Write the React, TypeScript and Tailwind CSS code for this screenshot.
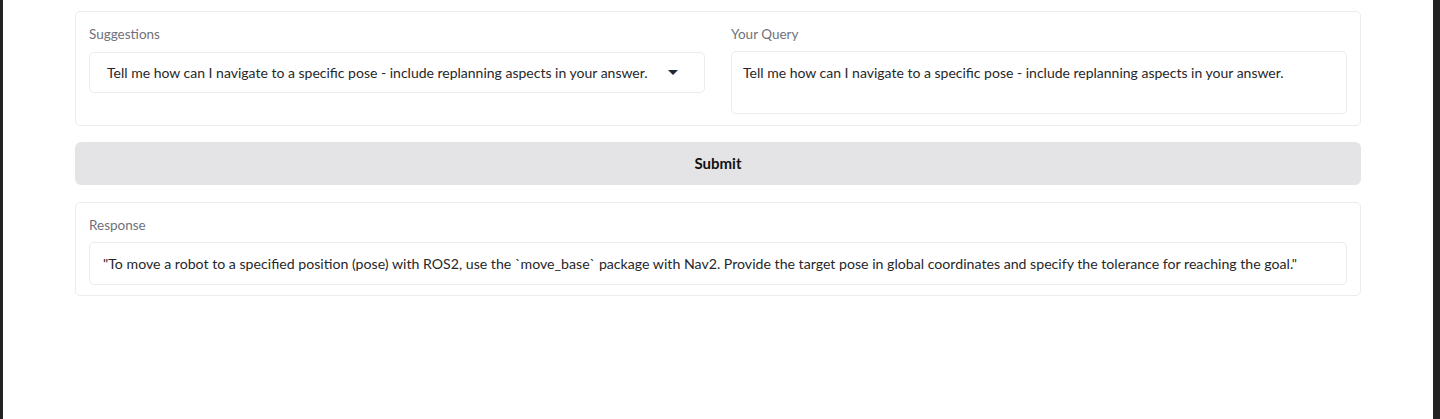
const suggestion =
  "Tell me how can I navigate to a specific pose - include replanning aspects in your answer.";

const response =
  '"To move a robot to a specified position (pose) with ROS2, use the `move_base` package with Nav2. Provide the target pose in global coordinates and specify the tolerance for reaching the goal."';

const Caret = () => (
  <svg width="10" height="5" viewBox="0 0 10 5" className="fill-[#1f2937]">
    <path d="M0 0h10L5 5z" />
  </svg>
);

export default function App() {
  return (
    <div className="flex h-[419px] w-full bg-[#222] font-['Lato','Noto_Sans',sans-serif]">
      <div className="ml-[3px] mr-[7px] flex-1 bg-white">
        <div className="flex flex-col px-[72px] pt-[11px]">
          {/* inputs */}
          <div className="grid grid-cols-2 gap-[26px] rounded-[5px] border border-[#ececee] px-[13px] pb-[11px] pt-[12px]">
            <div className="flex flex-col">
              <label className="mb-[8px] text-[13.5px] leading-[20px] text-[#71717a]">
                Suggestions
              </label>
              <div className="flex h-[41px] items-center justify-between rounded-[5px] border border-[#ececee] pl-[17px] pr-[26px] text-[14px] text-[#27272a]">
                <span>{suggestion}</span>
                <Caret />
              </div>
            </div>
            <div className="flex flex-col">
              <label className="mb-[7px] text-[13.5px] leading-[20px] text-[#71717a]">
                Your Query
              </label>
              <div className="h-[63px] rounded-[5px] border border-[#ececee] px-[11px] pt-[11px] text-[14px] leading-[20px] text-[#27272a]">
                {suggestion}
              </div>
            </div>
          </div>

          <button className="mt-[16px] h-[43px] rounded-[6px] bg-[#e4e4e7] text-[15px] font-bold text-[#111]">
            Submit
          </button>

          {/* response */}
          <div className="mt-[17px] flex flex-col rounded-[5px] border border-[#ececee] px-[13px] pb-[10px] pt-[12px]">
            <label className="mb-[7px] text-[13.5px] leading-[20px] text-[#71717a]">
              Response
            </label>
            <div className="flex h-[43px] items-center rounded-[5px] border border-[#ececee] px-[13px] text-[14.15px] text-[#27272a]">
              {response}
            </div>
          </div>
        </div>
      </div>
    </div>
  );
}
